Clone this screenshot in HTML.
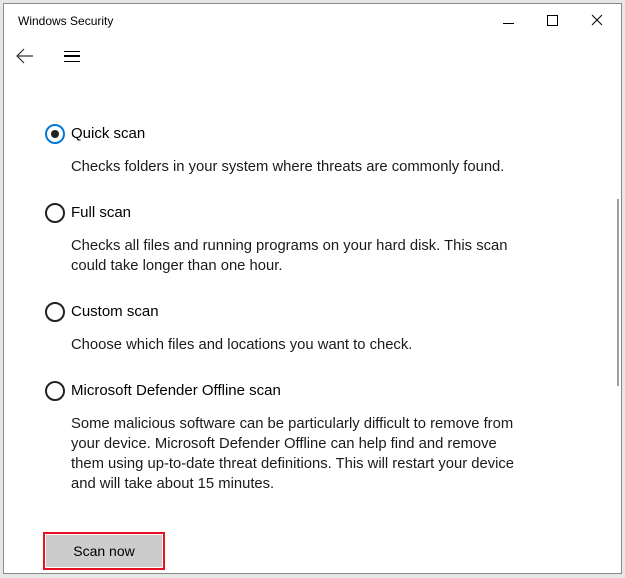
<!DOCTYPE html>
<html><head><style>
body{margin:0;width:625px;height:578px;background:#e6e6e6;position:relative;overflow:hidden;font-family:"Liberation Sans",sans-serif;color:#000}
.win{position:absolute;left:3px;top:3px;width:617px;height:569px;background:#fff;border:1px solid #8a8a8a}
.t{position:absolute;white-space:nowrap}
.lab{font-size:15px;left:67px}
.desc{font-size:14.8px;left:67px;line-height:20px;color:#1a1a1a}
.r{position:absolute;left:41px;width:16px;height:16px;border:2px solid #222;border-radius:50%}
</style></head><body>
<div class="win">
<div class="t" style="left:14px;top:10px;font-size:12px">Windows Security</div>
<div style="position:absolute;left:499px;top:19px;width:11px;height:1px;background:#000"></div>
<div style="position:absolute;left:543px;top:11px;width:9px;height:9px;border:1px solid #000"></div>
<svg style="position:absolute;left:587px;top:10px" width="12" height="12"><path d="M1 1L11 11M11 1L1 11" stroke="#000" stroke-width="1"/></svg>
<svg style="position:absolute;left:11px;top:44px" width="20" height="16"><path d="M2 8H18M9 1L2 8L9 15" stroke="#333" stroke-width="1.2" fill="none"/></svg>
<div style="position:absolute;left:60px;top:47px;width:16px;height:9px;border-top:1.5px solid #000;border-bottom:1.5px solid #000"></div>
<div style="position:absolute;left:60px;top:51px;width:16px;height:1.5px;background:#000"></div>
<div class="r" style="top:120px;border-color:#0078d7"><div style="position:absolute;left:4px;top:4px;width:8px;height:8px;border-radius:50%;background:#222"></div></div>
<div class="t lab" style="top:121px">Quick scan</div>
<div class="t desc" style="top:153px">Checks folders in your system where threats are commonly found.</div>
<div class="r" style="top:199px"></div>
<div class="t lab" style="top:200px">Full scan</div>
<div class="t desc" style="top:232px">Checks all files and running programs on your hard disk. This scan<br>could take longer than one hour.</div>
<div class="r" style="top:298px"></div>
<div class="t lab" style="top:299px">Custom scan</div>
<div class="t desc" style="top:331px">Choose which files and locations you want to check.</div>
<div class="r" style="top:377px"></div>
<div class="t lab" style="top:378px">Microsoft Defender Offline scan</div>
<div class="t desc" style="top:410px">Some malicious software can be particularly difficult to remove from<br>your device. Microsoft Defender Offline can help find and remove<br>them using up-to-date threat definitions. This will restart your device<br>and will take about 15 minutes.</div>
<div style="position:absolute;left:39px;top:528px;width:118px;height:34px;border:2px solid #e81123;background:#fff"><div style="position:absolute;left:1px;top:1px;right:1px;bottom:1px;background:#cccccc;font-size:14px;text-align:center;line-height:32px">Scan now</div></div>
<div style="position:absolute;left:613px;top:195px;width:2px;height:187px;background:#a0a0a0"></div>
</div>
</body></html>
